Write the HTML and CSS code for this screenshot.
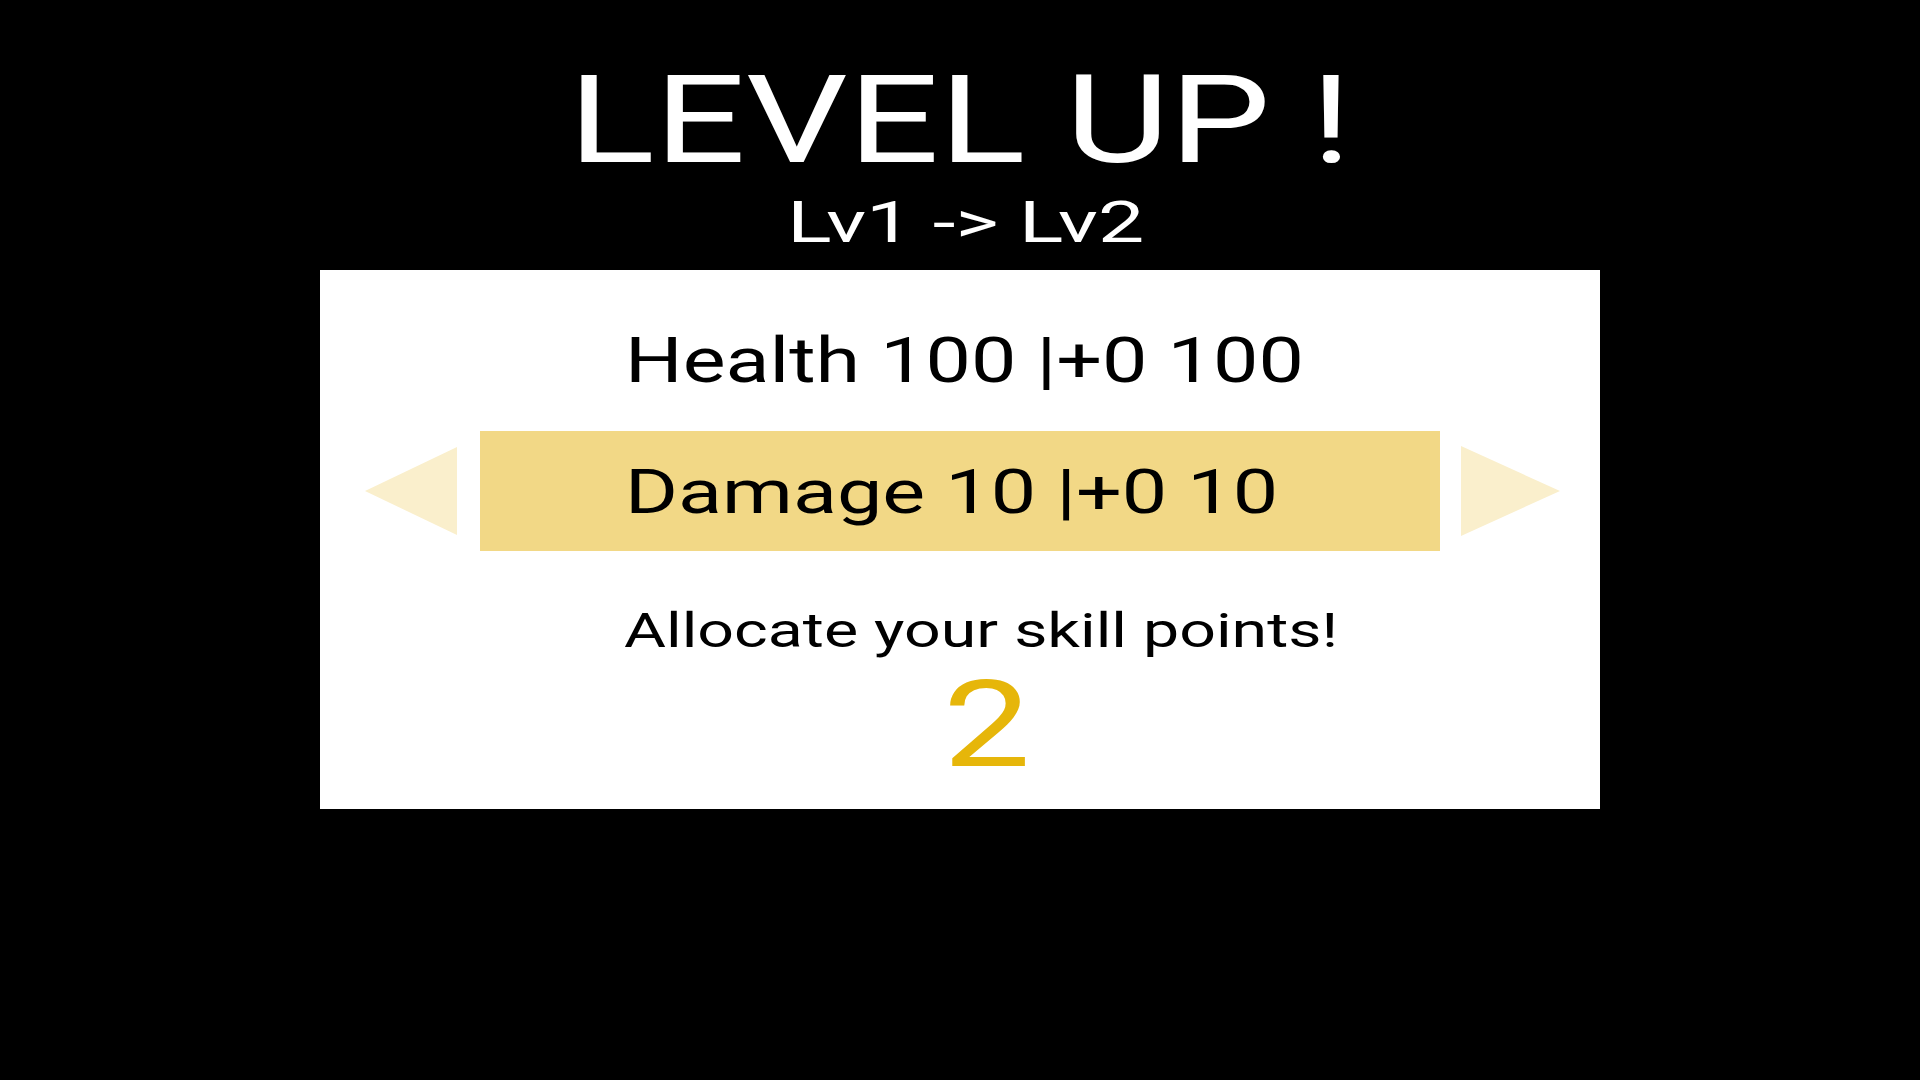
FILE: index.html
```html
<!DOCTYPE html>
<html lang="en">
<head>
<meta charset="utf-8">
<title>Level Up</title>
<link rel="stylesheet" href="styles.css">
</head>
<body>
<main class="screen">
  <h1 class="title"><span class="stretch title-text">LEVEL UP !</span></h1>
  <p class="levels"><span class="stretch levels-text">Lv1 -&gt; Lv2</span></p>
  <section class="panel">
    <div class="stat-row">
      <span class="arrow arrow-left hidden"></span>
      <div class="stat"><span class="stretch-left health-text">Health 100 |+0 100</span></div>
      <span class="arrow arrow-right hidden"></span>
    </div>
    <div class="stat-row">
      <svg class="arrow arrow-left" viewBox="0 0 92 88" width="92" height="88"><polygon points="0,44 92,0 92,88" fill="#FAEFCC"/></svg>
      <div class="stat selected"><span class="stretch-left damage-text">Damage 10 |+0 10</span></div>
      <svg class="arrow arrow-right" viewBox="0 0 99 90" width="99" height="90"><polygon points="0,0 99,45 0,90" fill="#FAEFCC"/></svg>
    </div>
    <p class="prompt"><span class="stretch prompt-text">Allocate your skill points!</span></p>
    <p class="points"><span class="stretch">2</span></p>
  </section>
</main>
</body>
</html>
```

FILE: styles.css
```css
html, body {
  margin: 0;
  padding: 0;
  background: #000;
}
body {
  width: 1920px;
  height: 1080px;
  overflow: hidden;
  font-family: Roboto, "Liberation Sans", sans-serif;
}
.screen {
  display: flex;
  flex-direction: column;
  align-items: center;
}
.stretch {
  display: inline-block;
  transform: scaleX(1.3);
  transform-origin: center;
  white-space: nowrap;
}
.stretch-left {
  display: inline-block;
  transform: scaleX(1.28);
  transform-origin: left center;
  white-space: nowrap;
}
.title-text {
  transform: scaleX(1.315);
}
.levels-text {
  transform: scaleX(1.42);
}
.health-text {
  transform: scaleX(1.283);
}
.damage-text {
  transform: scaleX(1.304);
}
.prompt-text {
  transform: scaleX(1.342);
}
.title {
  margin: 60px 0 0 0;
  font-size: 122px;
  line-height: 122px;
  font-weight: 400;
  color: #fff;
}
.levels {
  margin: 11px 0 0 12px;
  font-size: 58px;
  line-height: 58px;
  color: #fff;
}
.panel {
  margin-top: 19px;
  width: 1280px;
  height: 539px;
  box-sizing: border-box;
  background: #fff;
  padding-top: 31px;
  display: flex;
  flex-direction: column;
}
.stat-row {
  display: flex;
  align-items: center;
  height: 120px;
  padding-left: 45px;
}
.stat-row + .stat-row {
  margin-top: 10px;
}
.arrow {
  display: block;
  width: 92px;
  flex: none;
}
.arrow-left {
  height: 88px;
}
.arrow-right {
  width: 99px;
  height: 90px;
}
.hidden {
  visibility: hidden;
}
.stat {
  width: 960px;
  height: 120px;
  margin: 0 21px 0 23px;
  box-sizing: border-box;
  padding-left: 145px;
  font-size: 63px;
  line-height: 120px;
  color: #000;
}
.stat.selected {
  background: #F2D886;
  font-size: 62px;
  line-height: 121px;
}
.prompt {
  margin: 56px 0 0 42px;
  text-align: center;
  font-size: 48px;
  line-height: 48px;
  color: #000;
}
.points {
  margin: 10px 0 0 53px;
  text-align: center;
  font-size: 120px;
  line-height: 120px;
  color: #E6B60A;
}
```
